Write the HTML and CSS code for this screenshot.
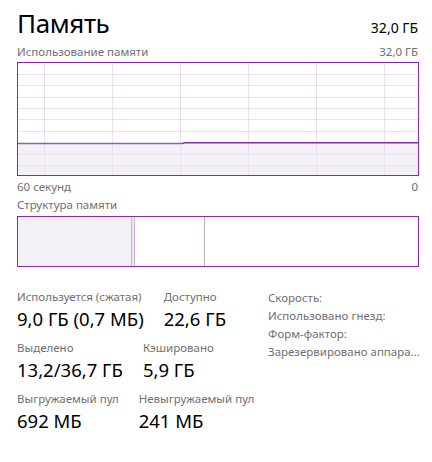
FILE: index.html
```html
<!DOCTYPE html>
<html lang="ru">
<head>
    <meta charset="UTF-8">
    <title>Память</title>
    <link rel="stylesheet" href="styles.css">
</head>
<body>

<div class="page">
    <header class="head">
        <h1 class="title">Память</h1>
        <span class="total">32,0 ГБ</span>
    </header>

    <div class="caption">
        <span>Использование памяти</span>
        <span>32,0 ГБ</span>
    </div>

    <div class="chart">
        <svg width="400" height="112" viewBox="0 0 400 112">
            <rect x="0" y="80" width="400" height="32" fill="#f4f1f6"/>
            <g stroke="#ecdff0" stroke-width="1">
                <line x1="0" y1="11.5" x2="400" y2="11.5"/>
                <line x1="0" y1="22.5" x2="400" y2="22.5"/>
                <line x1="0" y1="34.5" x2="400" y2="34.5"/>
                <line x1="0" y1="45.5" x2="400" y2="45.5"/>
                <line x1="0" y1="56.5" x2="400" y2="56.5"/>
                <line x1="0" y1="68.5" x2="400" y2="68.5"/>
                <line x1="0" y1="91.5" x2="400" y2="91.5"/>
                <line x1="0" y1="102.5" x2="400" y2="102.5"/>
                <line x1="26.5" y1="0" x2="26.5" y2="112"/>
                <line x1="94.5" y1="0" x2="94.5" y2="112"/>
                <line x1="162.5" y1="0" x2="162.5" y2="112"/>
                <line x1="230.5" y1="0" x2="230.5" y2="112"/>
                <line x1="298.5" y1="0" x2="298.5" y2="112"/>
                <line x1="366.5" y1="0" x2="366.5" y2="112"/>
            </g>
            <polyline points="0,80.5 164,80.5" fill="none" stroke="#a552bb" stroke-width="1.6"/>
            <polyline points="164,80.5 167,79.8 400,79.8" fill="none" stroke="#8b2aa8" stroke-width="1.6"/>
        </svg>
    </div>

    <div class="caption axis">
        <span>60 секунд</span>
        <span>0</span>
    </div>

    <div class="caption">
        <span>Структура памяти</span>
    </div>

    <div class="composition">
        <div class="part in-use" style="width: 113px"></div>
        <div class="part modified" style="width: 4px"></div>
        <div class="part standby" style="width: 70px"></div>
        <div class="part free"></div>
    </div>

    <section class="stats">
        <div class="stats-main">
            <div class="stat-row">
                <div class="stat">
                    <div class="stat-label">Используется (сжатая)</div>
                    <div class="stat-value">9,0 ГБ (0,7 МБ)</div>
                </div>
                <div class="stat">
                    <div class="stat-label">Доступно</div>
                    <div class="stat-value">22,6 ГБ</div>
                </div>
            </div>
            <div class="stat-row">
                <div class="stat">
                    <div class="stat-label">Выделено</div>
                    <div class="stat-value">13,2/36,7 ГБ</div>
                </div>
                <div class="stat">
                    <div class="stat-label">Кэшировано</div>
                    <div class="stat-value">5,9 ГБ</div>
                </div>
            </div>
            <div class="stat-row">
                <div class="stat">
                    <div class="stat-label">Выгружаемый пул</div>
                    <div class="stat-value">692 МБ</div>
                </div>
                <div class="stat">
                    <div class="stat-label">Невыгружаемый пул</div>
                    <div class="stat-value">241 МБ</div>
                </div>
            </div>
        </div>
        <ul class="props">
            <li>Скорость:</li>
            <li>Использовано гнезд:</li>
            <li>Форм-фактор:</li>
            <li>Зарезервировано аппара...</li>
        </ul>
    </section>
</div>

</body>
</html>
```

FILE: styles.css
```css
body {
    margin: 0;
    background-color: #fff;
    color: #000;
    font-family: "Noto Sans", "Open Sans", sans-serif;
}
.page {
    padding: 6px 14px 0 17px;
}
.head {
    display: flex;
    justify-content: space-between;
    align-items: baseline;
    height: 38px;
}
.title {
    margin: 0;
    font-size: 26px;
    font-weight: normal;
    letter-spacing: -0.4px;
    line-height: 34px;
}
.total {
    font-size: 14px;
}
.caption {
    display: flex;
    justify-content: space-between;
    font-size: 11.5px;
    color: #707070;
    line-height: 16px;
    height: 18px;
}
.axis {
    margin-top: 3px;
}
.chart {
    border: 1px solid #8b2aa8;
    width: 400px;
    height: 112px;
}
.chart svg {
    display: block;
}
.composition {
    display: flex;
    border: 1px solid #8b2aa8;
    width: 400px;
    height: 49px;
    margin-top: 1px;
}
.part {
    height: 100%;
    box-sizing: border-box;
}
.in-use {
    background-color: #f4f1f6;
}
.modified {
    background-color: #f0e4f3;
    border-left: 1px solid #cdb4d6;
    border-right: 1px solid #cdb4d6;
}
.standby {
    border-right: 1px solid #c0aac8;
}
.free {
    flex: 1;
}
.stats {
    display: flex;
    margin-top: 22px;
}
.stats-main {
    width: 252px;
}
.stat-row {
    display: flex;
    gap: 20px;
    height: 51px;
}
.stat-label {
    font-size: 11.5px;
    color: #707070;
    line-height: 16px;
}
.stat-value {
    font-size: 18.5px;
    line-height: 28px;
}
.props {
    list-style: none;
    margin: 0;
    padding: 0;
    width: 150px;
    font-size: 11.5px;
    color: #707070;
    line-height: 18px;
}
.props li {
    white-space: nowrap;
}
```
